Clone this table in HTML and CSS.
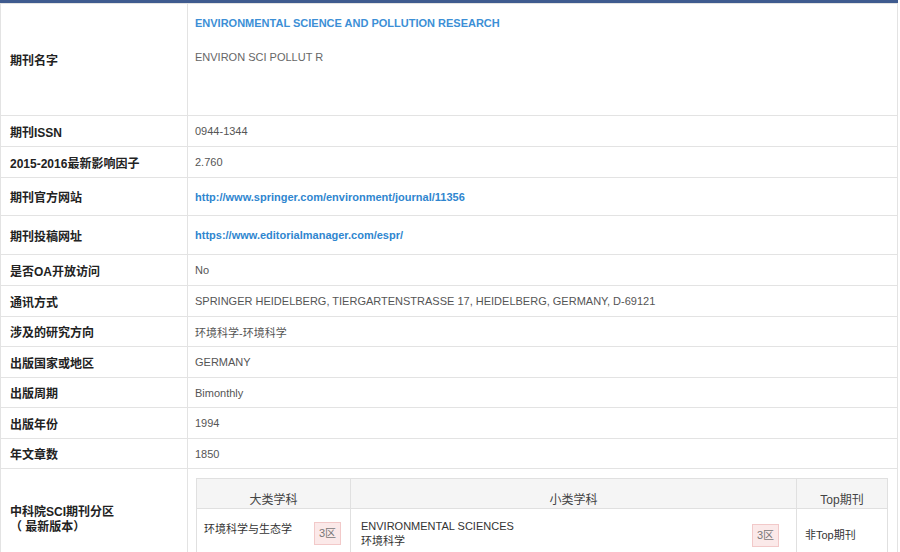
FILE: index.html
```html
<!DOCTYPE html>
<html lang="zh">
<head>
<meta charset="utf-8">
<link rel="stylesheet" href="styles.css">
</head>
<body>
<div class="wrap">
<table class="info">
<colgroup><col class="col-label"><col class="col-value"></colgroup>
<tr class="r-name"><th>期刊名字</th><td class="name-cell"><div class="full">ENVIRONMENTAL SCIENCE AND POLLUTION RESEARCH</div><div class="abbr">ENVIRON SCI POLLUT R</div></td></tr>
<tr class="r31"><th>期刊ISSN</th><td>0944-1344</td></tr>
<tr class="r31"><th>2015-2016最新影响因子</th><td>2.760</td></tr>
<tr class="r38"><th>期刊官方网站</th><td><a class="lnk">http://www.springer.com/environment/journal/11356</a></td></tr>
<tr class="r39"><th>期刊投稿网址</th><td><a class="lnk">https://www.editorialmanager.com/espr/</a></td></tr>
<tr class="r31"><th>是否OA开放访问</th><td>No</td></tr>
<tr class="r31"><th>通讯方式</th><td>SPRINGER HEIDELBERG, TIERGARTENSTRASSE 17, HEIDELBERG, GERMANY, D-69121</td></tr>
<tr class="r30"><th>涉及的研究方向</th><td>环境科学-环境科学</td></tr>
<tr class="r31"><th>出版国家或地区</th><td>GERMANY</td></tr>
<tr class="r30"><th>出版周期</th><td>Bimonthly</td></tr>
<tr class="r31"><th>出版年份</th><td>1994</td></tr>
<tr class="r30"><th>年文章数</th><td>1850</td></tr>
<tr class="r-zone"><th>中科院SCI期刊分区<br>（ 最新版本）</th><td class="zone-cell">
<table class="zone">
<colgroup><col class="zc1"><col class="zc2"><col class="zc3"></colgroup>
<tr class="zh"><th>大类学科</th><th>小类学科</th><th>Top期刊</th></tr>
<tr class="zb"><td class="c1"><div class="cellflex"><span class="txt">环境科学与生态学</span><span class="badge">3区</span></div></td>
<td class="c2"><div class="cellflex"><span class="sub">ENVIRONMENTAL SCIENCES<br>环境科学</span><span class="badge">3区</span></div></td>
<td class="c3">非Top期刊</td></tr>
</table>
</td></tr>
</table>
</div>
</body>
</html>
```
FILE: styles.css
```css
html, body { margin: 0; padding: 0; background: #fff; }
body { font-family: "Liberation Sans", Arial, "Noto Sans CJK SC", sans-serif; font-size: 11px; color: #555; overflow: hidden; }
.wrap { width: 898px; border-top: 3px solid #3f5b8f; }
.info { width: 898px; border-collapse: collapse; table-layout: fixed; }
.col-label { width: 187px; }
.info th { text-align: left; font-weight: bold; color: #222; font-size: 12px; padding: 0 0 0 9px; font-family: "Liberation Sans", "Noto Sans CJK SC", sans-serif; border: 1px solid #e3e3e3; vertical-align: middle; }
.info td { padding: 0 0 0 7px; border: 1px solid #e3e3e3; vertical-align: middle; color: #555; }
.r-name { height: 112px; }
.info td.name-cell { vertical-align: top; padding-top: 13px; }
.full { color: #3c8fd6; font-weight: bold; font-size: 11px; }
.abbr { color: #666; margin-top: 22px; }
.r31 { height: 31px; }
.r30 { height: 30px; }
.r38 { height: 38px; }
.r39 { height: 39px; }
.lnk { color: #2f86cf; font-weight: bold; }
.r-zone { height: 83px; }
.info .r-zone th { line-height: 15px; padding-top: 14px; }
.info td.zone-cell { vertical-align: top; padding: 9px 0 2px 8px; }
.zone { width: 692px; border-collapse: collapse; table-layout: fixed; }
.zc1 { width: 154px; }
.zc3 { width: 91px; }
.zone th, .zone td { border: 1px solid #e0e0e0; }
.zh { height: 30px; background: #f5f5f5; }
.zone th { font-weight: normal; color: #444; font-size: 12px; text-align: center; padding: 0; font-family: "Liberation Sans", "Noto Sans CJK SC", sans-serif; }
.info .zone td { padding: 12px 9px 0 7px; height: 28px; vertical-align: top; color: #333; font-size: 11px; border: 1px solid #e0e0e0; }
.info .zone td.c2 { padding-top: 10px; padding-left: 10px; }
.info .zone td.c3 { padding-top: 17px; padding-left: 8px; }
.cellflex { display: flex; justify-content: space-between; align-items: flex-start; }
.txt { line-height: 16px; }
.sub { line-height: 15px; }
.badge { display: inline-block; background: #fbe9e9; border: 1px solid #f2c9c9; color: #777; padding: 3px 4px; font-size: 11px; line-height: 15px; margin-top: 1px; }
.c2 .badge { margin-top: 5px; margin-right: 8px; }
```
